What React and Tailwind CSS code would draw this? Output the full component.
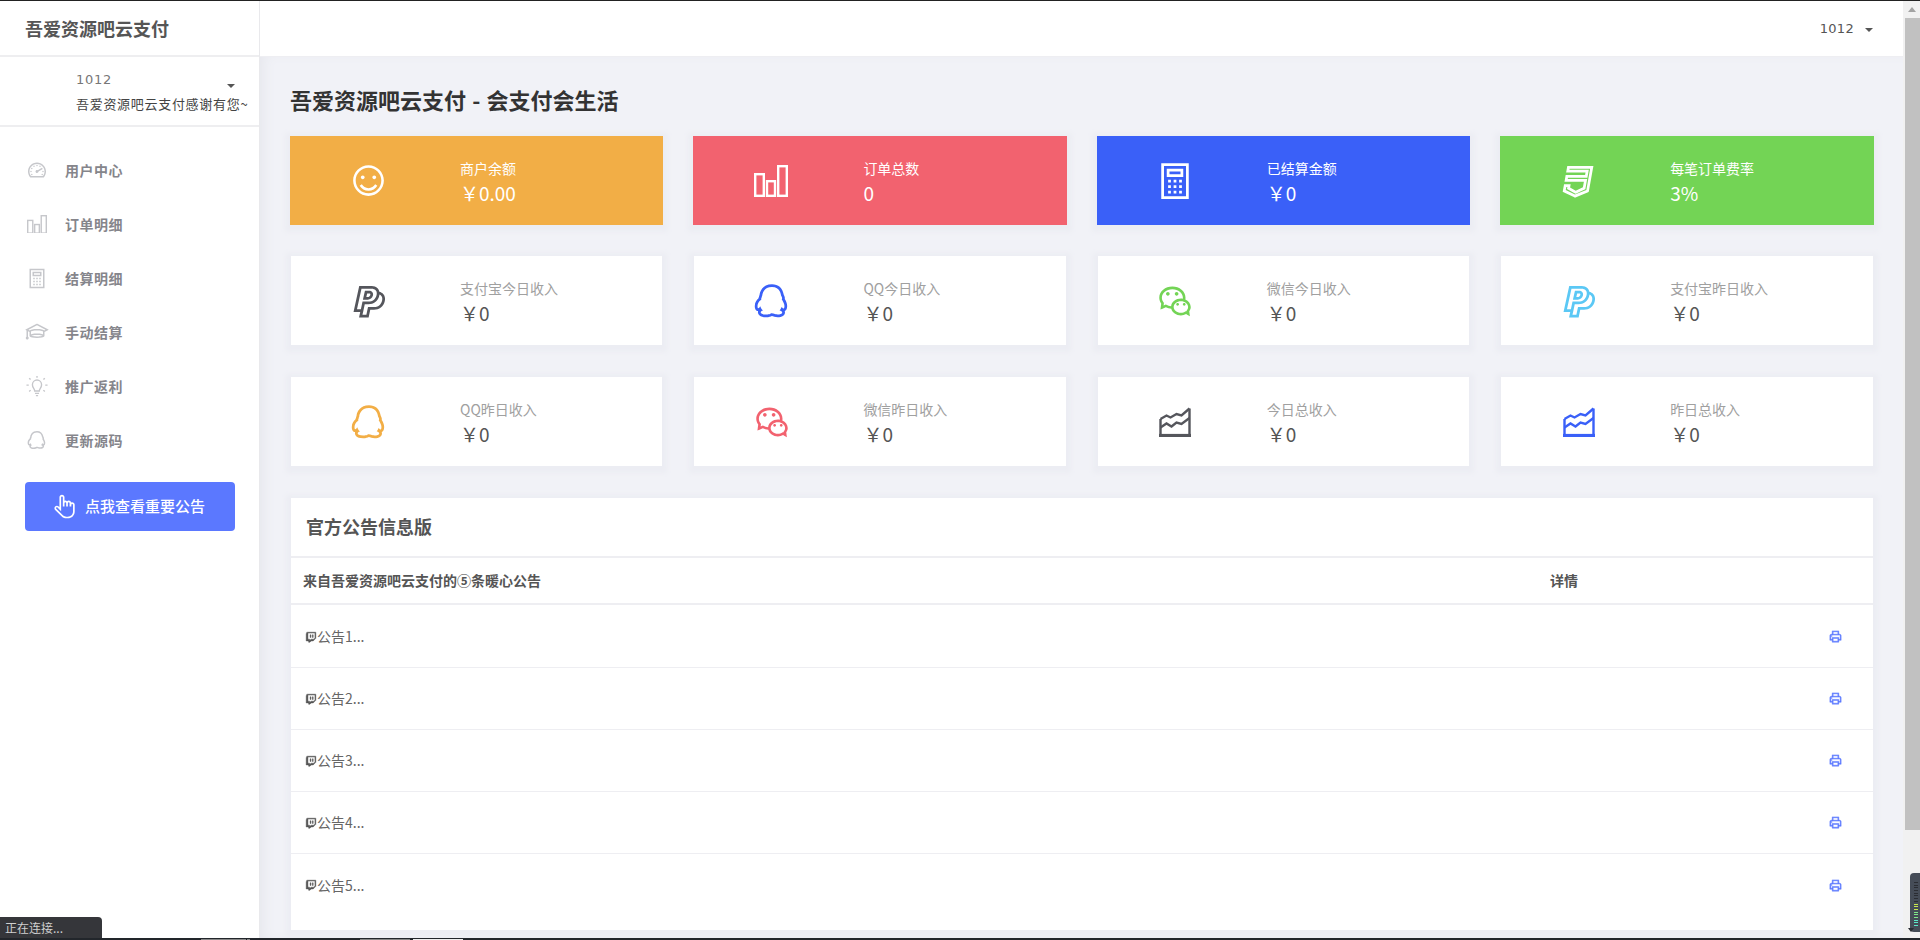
import {
  LiaPaypal,
  LiaQq,
  LiaWeixin,
  LiaCss3,
  LiaTwitch,
  LiaCalculatorSolid,
  LiaSmile,
  LiaTachometerAltSolid,
  LiaGraduationCapSolid,
  LiaPrintSolid,
  LiaHandPointer,
} from "react-icons/lia";

const cjk = "font-['Noto_Sans_CJK_SC','Noto_Sans',sans-serif]";

function BarsIcon({ className }) {
  return (
    <svg viewBox="0 0 34 32" fill="none" stroke="currentColor" strokeWidth="2.4" className={className}>
      <rect x="1.2" y="9.2" width="8.6" height="21.6" />
      <rect x="13" y="16.2" width="8" height="14.6" />
      <rect x="24.2" y="1.2" width="8.6" height="29.6" />
    </svg>
  );
}

function AreaIcon({ className }) {
  return (
    <svg viewBox="0 0 32 30" fill="none" stroke="currentColor" strokeWidth="2.4" className={className}>
      <path d="M1.5 12v16.5h29V1.5" />
      <path d="M1.5 12l6-3.5 4 2 6-3.5 5 1.5 8-7" />
      <path d="M1.5 20.5l6-4 5 3 5-4 5 1.5 8-6" />
      <path d="M0 28.5h32" strokeWidth="3.2" />
    </svg>
  );
}

function BulbIcon({ className }) {
  return (
    <svg viewBox="0 0 24 24" fill="none" stroke="currentColor" strokeWidth="1.5" className={className}>
      <path d="M9.5 17.5c0-2.5-2.5-3.5-2.5-7a5 5 0 0 1 10 0c0 3.5-2.5 4.5-2.5 7z" />
      <path d="M9.8 20h4.4M10.8 22.5h2.4" />
      <path d="M12 1v2M3.5 3.5l1.5 1.5M20.5 3.5L19 5M.5 11h2.5M21 11h2.5M3.5 18l1.5-1.5M20.5 18L19 16.5" />
    </svg>
  );
}

const navItems = [
  { label: "用户中心", icon: <LiaTachometerAltSolid className="text-[24px]" /> },
  { label: "订单明细", icon: <BarsIcon className="mx-[1px] w-[20px]" /> },
  { label: "结算明细", icon: <LiaCalculatorSolid className="text-[25px]" /> },
  { label: "手动结算", icon: <LiaGraduationCapSolid className="text-[26px]" /> },
  { label: "推广返利", icon: <BulbIcon className="w-[22px]" /> },
  { label: "更新源码", icon: <LiaQq className="text-[24px]" /> },
];

const topCards = [
  { label: "商户余额", value: "￥0.00", icon: <LiaSmile className="text-[41px]" />, bg: "bg-[#f2ae46]" },
  { label: "订单总数", value: "0", icon: <BarsIcon className="w-[34px]" />, bg: "bg-[#f2626f]" },
  { label: "已结算金额", value: "￥0", icon: <LiaCalculatorSolid className="text-[44px]" />, bg: "bg-[#3a60f8]" },
  { label: "每笔订单费率", value: "3%", icon: <LiaCss3 className="text-[44px]" />, bg: "bg-[#73d455]" },
];

const todayCards = [
  { label: "支付宝今日收入", icon: <LiaPaypal className="text-[44px] text-[#55565c]" /> },
  { label: "QQ今日收入", icon: <LiaQq className="text-[44px] text-[#3a60f8]" /> },
  { label: "微信今日收入", icon: <LiaWeixin className="text-[42px] text-[#73d455]" /> },
  { label: "支付宝昨日收入", icon: <LiaPaypal className="text-[44px] text-[#5bc8f5]" /> },
];

const yesterdayCards = [
  { label: "QQ昨日收入", icon: <LiaQq className="text-[44px] text-[#f2ae46]" /> },
  { label: "微信昨日收入", icon: <LiaWeixin className="text-[42px] text-[#f2626f]" /> },
  { label: "今日总收入", icon: <AreaIcon className="w-[32px] text-[#55565c]" /> },
  { label: "昨日总收入", icon: <AreaIcon className="w-[32px] text-[#3a60f8]" /> },
];

const notices = ["公告1...", "公告2...", "公告3...", "公告4...", "公告5..."];

function Caret() {
  return <span className="block border-x-[4px] border-t-[4px] border-x-transparent border-t-[#555]" />;
}

function ColorCard({ card }) {
  return (
    <div className={`flex h-[89px] items-center shadow-[0_2px_5px_5px_#ecedf3] ${card.bg} text-white`}>
      <div className="flex w-[170px] justify-center pr-[14px]">{card.icon}</div>
      <div className="pt-[2px]">
        <div className="text-[14px] leading-[22px]">{card.label}</div>
        <div className="text-[19px] leading-[28px]">{card.value}</div>
      </div>
    </div>
  );
}

function WhiteCard({ card }) {
  return (
    <div className="mx-px flex h-[89px] items-center bg-white shadow-[0_2px_5px_5px_#ecedf3]">
      <div className="flex w-[169px] justify-center pr-[14px]">{card.icon}</div>
      <div className="pt-[2px]">
        <div className="text-[14px] leading-[22px] text-[#a0a0a0]">{card.label}</div>
        <div className="text-[19px] leading-[28px] text-[#555]">￥0</div>
      </div>
    </div>
  );
}

function Sidebar() {
  return (
    <aside className="flex w-[260px] shrink-0 flex-col border-r border-[#e9e9ec] bg-white">
      <div className="flex h-[56px] items-center border-b-2 border-[#eeeef0] pl-[25px] text-[18px] font-bold text-[#555]">
        吾爱资源吧云支付
      </div>
      <div className="relative h-[70px] border-b-2 border-[#eeeef0] pl-[76px] pt-[13px] text-[13px] tracking-[0.7px] text-[#444]">
        <div className="font-['DejaVu_Sans',sans-serif] leading-[20px] text-[#777]">1012</div>
        <div className="mt-[4px] whitespace-nowrap leading-[20px]">吾爱资源吧云支付感谢有您~</div>
        <span className="absolute left-[227px] top-[27px]">
          <Caret />
        </span>
      </div>
      <nav className="pt-[16px]">
        {navItems.map((item) => (
          <div key={item.label} className="flex h-[54px] items-center pl-[25px]">
            <span className="flex w-[24px] justify-center text-[#c6c7cb]">{item.icon}</span>
            <span className="ml-[16px] text-[14px] font-bold tracking-[0.5px] text-[#85858b]">{item.label}</span>
          </div>
        ))}
      </nav>
      <div className="mx-[25px] mt-[15px] flex h-[49px] w-[210px] items-center rounded bg-[#5b78ff] pl-[26px] text-white">
        <LiaHandPointer className="text-[27px]" />
        <span className="ml-[7px] text-[15px] font-medium">点我查看重要公告</span>
      </div>
    </aside>
  );
}

function NoticePanel() {
  return (
    <section className="mx-px mt-[32px] h-[432px] bg-white shadow-[0_2px_5px_5px_#ecedf3]">
      <div className="flex h-[60px] items-center border-b-2 border-[#eeeef2] pl-[15px] pb-[2px] text-[18px] font-bold text-[#555]">
        官方公告信息版
      </div>
      <div className="flex h-[47px] items-center border-b-2 border-[#eeeef2] pl-[12px] text-[14px] font-bold text-[#555]">
        <span className="w-[1247px]">来自吾爱资源吧云支付的⑤条暖心公告</span>
        <span>详情</span>
      </div>
      <div className="pt-px">
        {notices.map((n) => (
          <div key={n} className="flex h-[62px] items-center justify-between border-b border-[#eeeef2] pl-[13px] pr-[30px] text-[14px] text-[#666] last:border-b-0">
            <span className="flex items-center">
              <LiaTwitch className="text-[14px] text-[#555]" stroke="currentColor" strokeWidth="1" />
              <span className="-ml-px">{n}</span>
            </span>
            <LiaPrintSolid className="text-[15px] text-[#5b78ff]" stroke="currentColor" strokeWidth="1" />
          </div>
        ))}
      </div>
    </section>
  );
}

function Scrollbar() {
  return (
    <div className="flex w-[17px] shrink-0 flex-col bg-[#f1f1f1]">
      <div className="flex h-[17px] items-center justify-center">
        <span className="border-x-[4px] border-b-[5px] border-x-transparent border-b-[#a3a3a3]" />
      </div>
      <div className="ml-[2px] h-[812px] bg-[#c1c1c1]" />
    </div>
  );
}

function VolumeWidget() {
  const bars = Array.from({ length: 17 });
  return (
    <div className="absolute bottom-[8px] right-0 flex h-[59px] w-[10px] flex-col items-end justify-end gap-[1.7px] rounded-l bg-[#454c57] py-[6px] pr-[2px]">
      {bars.map((_, i) => (
        <span
          key={i}
          className={`h-px w-[4px] ${i < 8 ? "bg-[#2a2d33]" : i < 11 ? "bg-[#c8e650]" : i < 14 ? "bg-[#7fe88a]" : "bg-[#5ce8c8]"}`}
        />
      ))}
      <span className="absolute bottom-0 left-[-2px] border-x-[3px] border-t-[4px] border-x-transparent border-t-[#2a2d33]" />
    </div>
  );
}

export default function App() {
  return (
    <div className={`relative flex h-screen flex-col overflow-hidden bg-[#f1f2f7] ${cjk}`}>
      <div className="h-px shrink-0 bg-[#222]" />
      <div className="flex min-h-0 flex-1">
        <Sidebar />
        <div className="flex min-w-0 flex-1 flex-col">
          <header className="flex h-[56px] shrink-0 items-center justify-end border-b border-[#eeeef2] bg-white pr-[30px]">
            <span className="font-['DejaVu_Sans',sans-serif] text-[13px] tracking-[0.3px] text-[#555]">1012</span>
            <span className="ml-[11px] mt-[3px]">
              <Caret />
            </span>
          </header>
          <main className="flex-1 pl-[30px] pr-[29.5px] shadow-[inset_8px_0_14px_-6px_#e4e5eb]">
            <h1 className="mt-[27px] mb-[2px] h-[50px] text-[22px] font-bold leading-[30px] text-[#333] [word-spacing:1.2px]">
              吾爱资源吧云支付 - 会支付会生活
            </h1>
            <div className="grid grid-cols-4 gap-x-[30px]">
              {topCards.map((c) => (
                <ColorCard key={c.label} card={c} />
              ))}
            </div>
            <div className="mt-[31px] grid grid-cols-4 gap-x-[30px]">
              {todayCards.map((c) => (
                <WhiteCard key={c.label} card={c} />
              ))}
            </div>
            <div className="mt-[32px] grid grid-cols-4 gap-x-[30px]">
              {yesterdayCards.map((c) => (
                <WhiteCard key={c.label} card={c} />
              ))}
            </div>
            <NoticePanel />
          </main>
        </div>
        <Scrollbar />
      </div>
      <div className="flex h-[2px] shrink-0 items-end bg-[#22262b]">
        <span className="ml-[201px] h-px w-[45px] bg-[#888]" />
        <span className="ml-[1px] h-px w-[3px] bg-[#888]" />
        <span className="ml-[110px] h-px w-[50px] bg-[#888]" />
        <span className="ml-[3px] h-px w-[50px] bg-[#eee]" />
      </div>
      <div className="absolute bottom-[2px] left-0 flex h-[21px] w-[102px] items-center rounded-tr bg-[#35363a] pl-[5px] text-[12px] text-[#d0d0d0]">
        正在连接...
      </div>
      <VolumeWidget />
    </div>
  );
}
